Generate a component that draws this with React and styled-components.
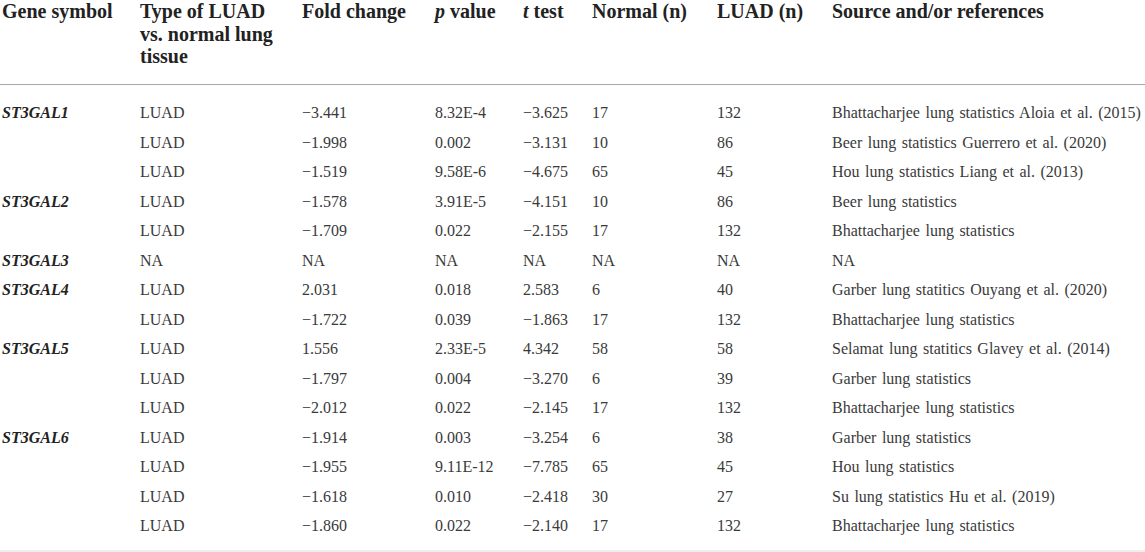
import React from 'react'
import styled, { createGlobalStyle } from 'styled-components'

const rows = [
  ['ST3GAL1', 'LUAD', '−3.441', '8.32E-4', '−3.625', '17', '132', 'Bhattacharjee lung statistics Aloia et al. (2015)'],
  ['', 'LUAD', '−1.998', '0.002', '−3.131', '10', '86', 'Beer lung statistics Guerrero et al. (2020)'],
  ['', 'LUAD', '−1.519', '9.58E-6', '−4.675', '65', '45', 'Hou lung statistics Liang et al. (2013)'],
  ['ST3GAL2', 'LUAD', '−1.578', '3.91E-5', '−4.151', '10', '86', 'Beer lung statistics'],
  ['', 'LUAD', '−1.709', '0.022', '−2.155', '17', '132', 'Bhattacharjee lung statistics'],
  ['ST3GAL3', 'NA', 'NA', 'NA', 'NA', 'NA', 'NA', 'NA'],
  ['ST3GAL4', 'LUAD', '2.031', '0.018', '2.583', '6', '40', 'Garber lung statitics Ouyang et al. (2020)'],
  ['', 'LUAD', '−1.722', '0.039', '−1.863', '17', '132', 'Bhattacharjee lung statistics'],
  ['ST3GAL5', 'LUAD', '1.556', '2.33E-5', '4.342', '58', '58', 'Selamat lung statitics Glavey et al. (2014)'],
  ['', 'LUAD', '−1.797', '0.004', '−3.270', '6', '39', 'Garber lung statistics'],
  ['', 'LUAD', '−2.012', '0.022', '−2.145', '17', '132', 'Bhattacharjee lung statistics'],
  ['ST3GAL6', 'LUAD', '−1.914', '0.003', '−3.254', '6', '38', 'Garber lung statistics'],
  ['', 'LUAD', '−1.955', '9.11E-12', '−7.785', '65', '45', 'Hou lung statistics'],
  ['', 'LUAD', '−1.618', '0.010', '−2.418', '30', '27', 'Su lung statistics Hu et al. (2019)'],
  ['', 'LUAD', '−1.860', '0.022', '−2.140', '17', '132', 'Bhattacharjee lung statistics'],
]

// column widths, taken from where each column's text starts
const widths = [138, 162, 133, 88, 69, 125, 115, 315]

const GlobalStyle = createGlobalStyle`
  html, body {
    margin: 0;
    padding: 0;
    background: #fff;
    overflow: hidden;
  }
`

const Page = styled.div`
  width: 1145px;
  height: 552px;
  overflow: hidden;
  font-family: "Liberation Serif", "Times New Roman", serif;
`

const Table = styled.table`
  width: 1145px;
  border-collapse: collapse;
  table-layout: fixed;
  border-bottom: 2px solid #eeeeee;
`

const HeadCell = styled.th`
  text-align: left;
  vertical-align: top;
  font-size: 20px;
  font-weight: bold;
  line-height: 22.5px;
  color: #222;
  padding: 0 ${p => (p.$wrap ? '20px' : '0')} 16.5px 2px;
  white-space: ${p => (p.$wrap ? 'normal' : 'nowrap')};
  border-bottom: 1px solid #a8a8a8;
`

const Cell = styled.td`
  font-size: 16px;
  line-height: 29.5px;
  color: #3a3a3a;
  white-space: nowrap;
  word-spacing: ${p => (p.$source ? '1.5px' : '0')};
  padding: ${p => (p.$first ? '13px' : '0')} 0 ${p => (p.$last ? '9px' : '0')} 2px;
`

const Gene = styled.span`
  font-weight: bold;
  font-style: italic;
  color: #222;
`

const Ital = styled.i``

export default function App() {
  return (
    <Page>
      <GlobalStyle />
      <Table>
        <colgroup>
          {widths.map((w, i) => (
            <col key={i} style={{ width: w }} />
          ))}
        </colgroup>
        <thead>
          <tr>
            <HeadCell>Gene symbol</HeadCell>
            <HeadCell $wrap>Type of LUAD vs. normal lung tissue</HeadCell>
            <HeadCell>Fold change</HeadCell>
            <HeadCell><Ital>p</Ital> value</HeadCell>
            <HeadCell><Ital>t</Ital> test</HeadCell>
            <HeadCell>Normal (n)</HeadCell>
            <HeadCell>LUAD (n)</HeadCell>
            <HeadCell>Source and/or references</HeadCell>
          </tr>
        </thead>
        <tbody>
          {rows.map((r, i) => (
            <tr key={i}>
              {r.map((c, j) => (
                <Cell
                  key={j}
                  $first={i === 0}
                  $last={i === rows.length - 1}
                  $source={j === 7}
                >
                  {j === 0 ? <Gene>{c}</Gene> : c}
                </Cell>
              ))}
            </tr>
          ))}
        </tbody>
      </Table>
    </Page>
  )
}
